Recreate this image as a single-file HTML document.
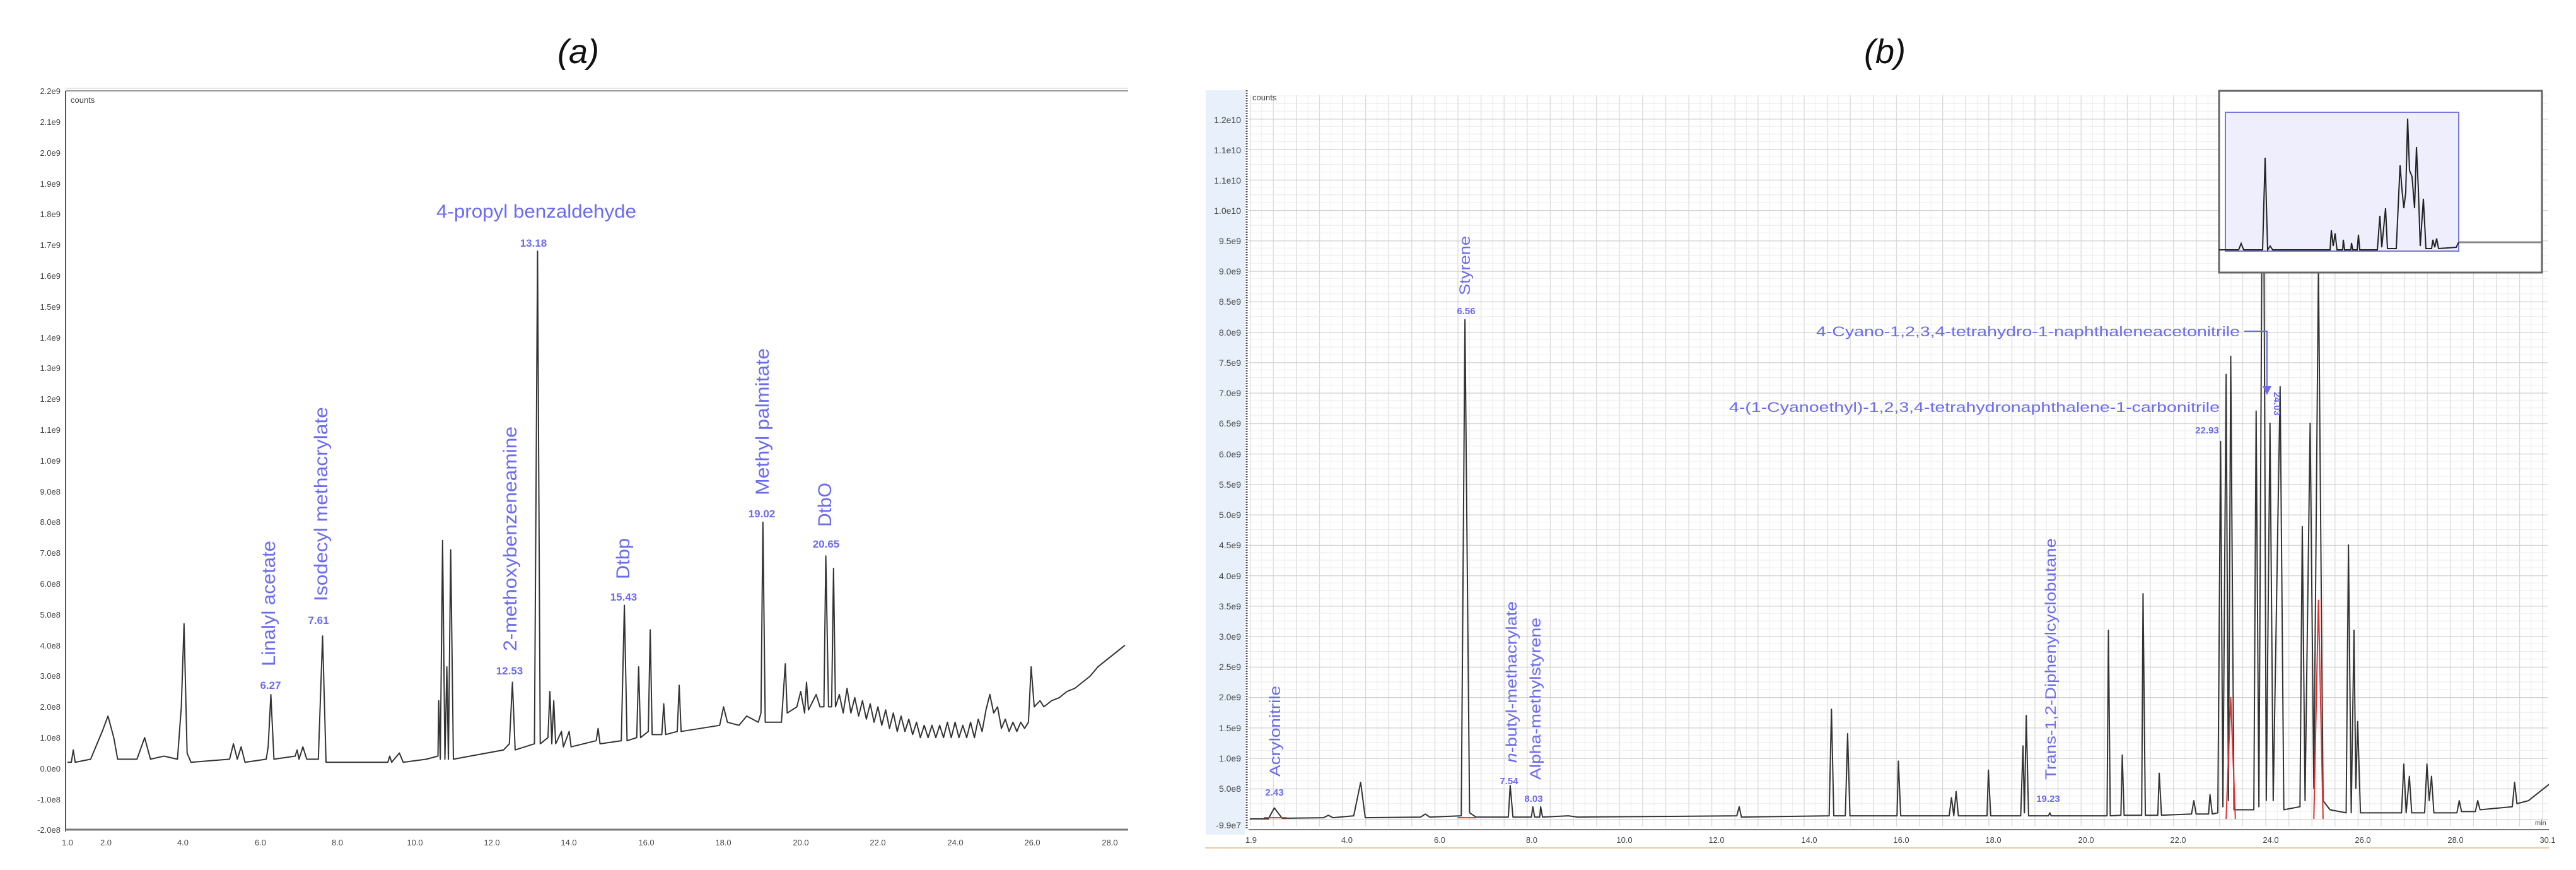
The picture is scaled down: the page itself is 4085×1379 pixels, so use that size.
<!DOCTYPE html>
<html><head><meta charset="utf-8"><style>
html,body{margin:0;padding:0;background:#fff;}
svg{display:block;}
text{font-family:"Liberation Sans",Arial,sans-serif;}
</style></head><body>
<svg width="4085" height="1379" viewBox="0 0 4085 1379" xmlns="http://www.w3.org/2000/svg">
<defs>
<pattern id="gv" x="1982" y="0" width="36.6" height="10" patternUnits="userSpaceOnUse">
<line x1="0.5" y1="0" x2="0.5" y2="10" stroke="#d8d8d8" stroke-width="1.5"/>
<line x1="18.8" y1="0" x2="18.8" y2="10" stroke="#ececec" stroke-width="1"/>
</pattern>
<pattern id="gh" x="0" y="1298" width="10" height="48.25" patternUnits="userSpaceOnUse">
<line x1="0" y1="0.5" x2="10" y2="0.5" stroke="#d0d0d0" stroke-width="1.5"/>
<line x1="0" y1="12.06" x2="10" y2="12.06" stroke="#ededed" stroke-width="1"/>
<line x1="0" y1="24.1" x2="10" y2="24.1" stroke="#e6e6e6" stroke-width="1"/>
<line x1="0" y1="36.2" x2="10" y2="36.2" stroke="#ededed" stroke-width="1"/>
</pattern>
<clipPath id="cr"><rect x="1978" y="146" width="2064" height="1170"/></clipPath>
</defs>

<text x="917" y="100" font-size="54" font-style="italic" text-anchor="middle" fill="#111">(a)</text>
<text x="2989" y="100" font-size="54" font-style="italic" text-anchor="middle" fill="#111">(b)</text>

<!-- ============ LEFT PANEL ============ -->
<line x1="104" y1="144" x2="1789" y2="144" stroke="#999" stroke-width="2"/>
<line x1="104" y1="140" x2="1789" y2="140" stroke="#ccc" stroke-width="1"/>
<line x1="104" y1="144" x2="104" y2="1318" stroke="#555" stroke-width="2"/>
<line x1="104" y1="1315" x2="1789" y2="1315" stroke="#777" stroke-width="3"/>
<text x="112" y="163" font-size="13" fill="#444">counts</text>
<g font-size="13" fill="#444" text-anchor="end">
<text x="96" y="149">2.2e9</text><text x="96" y="198">2.1e9</text><text x="96" y="247">2.0e9</text><text x="96" y="296">1.9e9</text><text x="96" y="344">1.8e9</text><text x="96" y="393">1.7e9</text><text x="96" y="442">1.6e9</text><text x="96" y="491">1.5e9</text><text x="96" y="540">1.4e9</text><text x="96" y="588">1.3e9</text><text x="96" y="637">1.2e9</text><text x="96" y="686">1.1e9</text><text x="96" y="735">1.0e9</text><text x="96" y="784">9.0e8</text><text x="96" y="832">8.0e8</text><text x="96" y="881">7.0e8</text><text x="96" y="930">6.0e8</text><text x="96" y="979">5.0e8</text><text x="96" y="1028">4.0e8</text><text x="96" y="1076">3.0e8</text><text x="96" y="1125">2.0e8</text><text x="96" y="1174">1.0e8</text><text x="96" y="1223">0.0e0</text><text x="96" y="1272">-1.0e8</text><text x="96" y="1320">-2.0e8</text>
</g>
<g font-size="13" fill="#444" text-anchor="middle">
<text x="107" y="1340">1.0</text><text x="168" y="1340">2.0</text><text x="290" y="1340">4.0</text><text x="413" y="1340">6.0</text><text x="535" y="1340">8.0</text><text x="658" y="1340">10.0</text><text x="780" y="1340">12.0</text><text x="902" y="1340">14.0</text><text x="1025" y="1340">16.0</text><text x="1147" y="1340">18.0</text><text x="1270" y="1340">20.0</text><text x="1392" y="1340">22.0</text><text x="1515" y="1340">24.0</text><text x="1637" y="1340">26.0</text><text x="1760" y="1340">28.0</text>
</g>
<g transform="translate(107,1218) scale(61.2,-488) translate(-1,0)">
<path fill="none" stroke="#333" stroke-width="2" vector-effect="non-scaling-stroke" stroke-linejoin="round" d="M1 0.02 L1.1 0.02 L1.15 0.06 L1.2 0.02 L1.6 0.03 L1.9 0.12 L2.05 0.17 L2.2 0.1 L2.3 0.03 L2.8 0.03 L3.0 0.1 L3.15 0.03 L3.5 0.04 L3.85 0.03 L3.95 0.2 L4.02 0.47 L4.1 0.05 L4.2 0.02 L5.2 0.03 L5.3 0.08 L5.4 0.03 L5.5 0.07 L5.6 0.02 L6.15 0.03 L6.2 0.07 L6.27 0.24 L6.35 0.03 L6.9 0.04 L6.95 0.06 L7.0 0.03 L7.1 0.07 L7.2 0.03 L7.5 0.03 L7.61 0.43 L7.7 0.02 L9.3 0.02 L9.35 0.04 L9.4 0.02 L9.6 0.05 L9.7 0.02 L10.3 0.03 L10.6 0.04 L10.62 0.22 L10.66 0.03 L10.72 0.74 L10.78 0.03 L10.83 0.33 L10.87 0.03 L10.93 0.71 L11.0 0.03 L12.3 0.06 L12.45 0.08 L12.53 0.28 L12.6 0.06 L13.1 0.08 L13.18 1.68 L13.25 0.08 L13.45 0.1 L13.5 0.25 L13.55 0.08 L13.6 0.22 L13.65 0.08 L13.8 0.12 L13.85 0.07 L14.0 0.12 L14.05 0.07 L14.7 0.09 L14.75 0.13 L14.8 0.08 L15.35 0.09 L15.43 0.53 L15.5 0.09 L15.75 0.1 L15.8 0.33 L15.85 0.1 L16.05 0.12 L16.1 0.45 L16.15 0.11 L16.4 0.11 L16.45 0.21 L16.5 0.11 L16.8 0.12 L16.85 0.27 L16.9 0.12 L17.9 0.14 L18.0 0.2 L18.1 0.15 L18.4 0.14 L18.6 0.17 L18.9 0.15 L18.97 0.18 L19.02 0.8 L19.08 0.15 L19.5 0.15 L19.6 0.34 L19.65 0.18 L19.9 0.2 L20.0 0.25 L20.1 0.18 L20.15 0.28 L20.2 0.19 L20.4 0.24 L20.5 0.2 L20.6 0.2 L20.65 0.69 L20.72 0.2 L20.8 0.2 L20.85 0.65 L20.9 0.2 L21.0 0.24 L21.1 0.18 L21.2 0.26 L21.3 0.18 L21.4 0.23 L21.5 0.17 L21.6 0.22 L21.7 0.16 L21.8 0.21 L21.9 0.15 L22.0 0.2 L22.1 0.14 L22.2 0.19 L22.3 0.13 L22.4 0.18 L22.5 0.12 L22.6 0.17 L22.7 0.12 L22.8 0.16 L22.9 0.11 L23.0 0.15 L23.1 0.1 L23.2 0.14 L23.3 0.1 L23.4 0.14 L23.5 0.1 L23.6 0.14 L23.7 0.1 L23.8 0.15 L23.9 0.1 L24.0 0.15 L24.1 0.1 L24.2 0.14 L24.3 0.1 L24.4 0.15 L24.5 0.1 L24.6 0.16 L24.7 0.12 L24.8 0.19 L24.9 0.24 L25.0 0.18 L25.1 0.2 L25.2 0.13 L25.3 0.16 L25.4 0.12 L25.5 0.15 L25.6 0.12 L25.7 0.15 L25.8 0.13 L25.9 0.15 L25.97 0.33 L26.05 0.2 L26.2 0.22 L26.3 0.2 L26.5 0.22 L26.7 0.23 L26.9 0.25 L27.1 0.26 L27.3 0.28 L27.5 0.3 L27.7 0.33 L27.9 0.35 L28.1 0.37 L28.4 0.4"/>
</g>
<g fill="#6b6bf0" font-size="30">
<text x="692" y="345" textLength="317" lengthAdjust="spacingAndGlyphs">4-propyl benzaldehyde</text>
<text transform="translate(436,1056) rotate(-90)" textLength="199" lengthAdjust="spacingAndGlyphs">Linalyl acetate</text>
<text transform="translate(519,953) rotate(-90)" textLength="308" lengthAdjust="spacingAndGlyphs">Isodecyl methacrylate</text>
<text transform="translate(819,1032) rotate(-90)" textLength="356" lengthAdjust="spacingAndGlyphs">2-methoxybenzeneamine</text>
<text transform="translate(998,918) rotate(-90)" textLength="65" lengthAdjust="spacingAndGlyphs">Dtbp</text>
<text transform="translate(1219,785) rotate(-90)" textLength="233" lengthAdjust="spacingAndGlyphs">Methyl palmitate</text>
<text transform="translate(1318,835) rotate(-90)" textLength="70" lengthAdjust="spacingAndGlyphs">DtbO</text>
</g>
<g fill="#6b6bf0" font-size="17" font-weight="bold" text-anchor="middle">
<text x="846" y="391">13.18</text>
<text x="429" y="1092">6.27</text>
<text x="505" y="989">7.61</text>
<text x="808" y="1069">12.53</text>
<text x="989" y="952">15.43</text>
<text x="1208" y="820">19.02</text>
<text x="1310" y="868">20.65</text>
</g>

<!-- ============ RIGHT PANEL ============ -->
<rect x="1911" y="143" width="2131" height="1201" fill="#fff"/>
<rect x="1912" y="143" width="62" height="1180" fill="#e8f1fb"/>
<rect x="1980" y="150" width="2060" height="1160" fill="url(#gv)"/>
<rect x="1980" y="150" width="2060" height="1160" fill="url(#gh)"/>
<line x1="1977" y1="143" x2="1977" y2="1315" stroke="#555" stroke-width="3" stroke-dasharray="2,2"/>
<line x1="1980" y1="1315" x2="4042" y2="1315" stroke="#777" stroke-width="2"/>
<line x1="1911" y1="1344" x2="4042" y2="1344" stroke="#e8c9a0" stroke-width="2"/>
<text x="1986" y="159" font-size="13" fill="#444">counts</text>
<text x="4020" y="1308" font-size="11" fill="#444">min</text>
<g font-size="14" fill="#444" text-anchor="end">
<text x="1968" y="195">1.2e10</text><text x="1968" y="243">1.1e10</text><text x="1968" y="291">1.1e10</text><text x="1968" y="339">1.0e10</text>
<text x="1968" y="387">9.5e9</text><text x="1968" y="435">9.0e9</text><text x="1968" y="483">8.5e9</text><text x="1968" y="532">8.0e9</text><text x="1968" y="580">7.5e9</text><text x="1968" y="628">7.0e9</text><text x="1968" y="676">6.5e9</text><text x="1968" y="725">6.0e9</text><text x="1968" y="773">5.5e9</text><text x="1968" y="821">5.0e9</text><text x="1968" y="869">4.5e9</text><text x="1968" y="918">4.0e9</text><text x="1968" y="966">3.5e9</text><text x="1968" y="1014">3.0e9</text><text x="1968" y="1062">2.5e9</text><text x="1968" y="1110">2.0e9</text><text x="1968" y="1159">1.5e9</text><text x="1968" y="1207">1.0e9</text><text x="1968" y="1255">5.0e8</text><text x="1968" y="1313">-9.9e7</text>
</g>
<g font-size="13" fill="#444" text-anchor="middle">
<text x="1984" y="1336">1.9</text><text x="2136" y="1336">4.0</text><text x="2283" y="1336">6.0</text><text x="2429" y="1336">8.0</text><text x="2576" y="1336">10.0</text><text x="2722" y="1336">12.0</text><text x="2869" y="1336">14.0</text><text x="3015" y="1336">16.0</text><text x="3161" y="1336">18.0</text><text x="3308" y="1336">20.0</text><text x="3454" y="1336">22.0</text><text x="3601" y="1336">24.0</text><text x="3747" y="1336">26.0</text><text x="3894" y="1336">28.0</text><text x="4040" y="1336">30.1</text>
</g>
<g clip-path="url(#cr)">
<g transform="translate(1982,1298) scale(73.2,-96.5) translate(-1.9,0)">
<path fill="none" stroke="#333" stroke-width="2" vector-effect="non-scaling-stroke" stroke-linejoin="round" d="M1.9 0 L2.3 0 L2.43 0.18 L2.6 0.01 L3.5 0.02 L3.6 0.06 L3.7 0.02 L4.15 0.05 L4.3 0.6 L4.4 0.02 L5.6 0.03 L5.7 0.08 L5.8 0.03 L6.48 0.05 L6.56 8.2 L6.66 0.1 L6.8 0.03 L7.5 0.03 L7.54 0.55 L7.6 0.03 L8.0 0.03 L8.03 0.2 L8.07 0.03 L8.18 0.03 L8.2 0.2 L8.24 0.03 L8.8 0.05 L9.0 0.03 L12.45 0.05 L12.5 0.2 L12.55 0.03 L14.45 0.05 L14.5 1.8 L14.55 0.05 L14.8 0.05 L14.85 1.4 L14.9 0.05 L15.92 0.05 L15.95 0.95 L16.0 0.05 L17.05 0.05 L17.1 0.35 L17.15 0.05 L17.2 0.45 L17.25 0.05 L17.87 0.05 L17.9 0.8 L17.95 0.05 L18.6 0.05 L18.65 1.2 L18.68 0.1 L18.72 1.7 L18.77 0.05 L19.2 0.05 L19.23 0.1 L19.26 0.05 L20.47 0.05 L20.5 3.1 L20.54 0.05 L20.77 0.06 L20.8 1.05 L20.84 0.06 L21.22 0.06 L21.25 3.7 L21.3 0.06 L21.57 0.06 L21.6 0.75 L21.65 0.06 L22.3 0.08 L22.35 0.3 L22.4 0.08 L22.67 0.08 L22.7 0.4 L22.75 0.08 L22.87 0.1 L22.93 6.2 L22.98 0.2 L23.05 7.3 L23.1 0.3 L23.15 7.6 L23.22 0.15 L23.65 0.15 L23.7 6.7 L23.76 0.2 L23.85 13 L23.92 0.3 L24.0 6.5 L24.07 0.3 L24.22 7.1 L24.3 0.15 L24.65 0.2 L24.7 4.8 L24.76 0.3 L24.87 6.5 L24.95 0.5 L25.05 9.1 L25.15 0.3 L25.3 0.15 L25.65 0.1 L25.7 4.5 L25.76 0.1 L25.82 3.1 L25.86 0.5 L25.9 1.6 L25.96 0.1 L26.85 0.1 L26.9 0.9 L26.95 0.1 L27.02 0.7 L27.07 0.1 L27.35 0.1 L27.4 0.9 L27.45 0.3 L27.5 0.7 L27.55 0.1 L28.05 0.1 L28.1 0.3 L28.15 0.12 L28.45 0.12 L28.5 0.3 L28.55 0.15 L29.25 0.2 L29.3 0.6 L29.35 0.25 L29.6 0.3 L30.1 0.6"/>
<path fill="none" stroke="#e03030" stroke-width="2" vector-effect="non-scaling-stroke" d="M23.05 0 L23.15 2.0 L23.25 0 M24.95 0 L25.05 3.6 L25.15 0 M2.2 0.02 L2.7 0.02 M6.4 0.02 L6.8 0.02"/>
</g>
</g>
<rect x="3519" y="144" width="512" height="288" fill="#fff" stroke="#666" stroke-width="3"/>
<rect x="3529" y="178" width="370" height="220" fill="#eeeefc" stroke="#7777dd" stroke-width="2"/>
<line x1="3899" y1="384" x2="4030" y2="384" stroke="#888" stroke-width="3"/>
<path fill="none" stroke="#222" stroke-width="2" d="M3519 396 L3550 396 L3554 386 L3558 396 L3588 396 L3592 250 L3596 396 L3600 390 L3604 396 L3695 396 L3697 365 L3700 390 L3703 370 L3706 396 L3715 396 L3716 380 L3718 396 L3728 396 L3729 385 L3731 396 L3738 396 L3740 372 L3742 396 L3770 396 L3774 342 L3777 392 L3783 330 L3786 394 L3800 394 L3806 262 L3809 300 L3812 330 L3815 305 L3818 188 L3821 270 L3825 280 L3829 330 L3832 233 L3835 300 L3838 390 L3843 315 L3847 394 L3856 394 L3858 380 L3861 392 L3864 378 L3867 394 L3895 392 L3899 384"/>
<g fill="#6b6bf0" font-size="24">
<text transform="translate(2331,468) rotate(-90)" textLength="94" lengthAdjust="spacingAndGlyphs">Styrene</text>
<text transform="translate(2030,1231) rotate(-90)" textLength="144" lengthAdjust="spacingAndGlyphs">Acrylonitrile</text>
<text transform="translate(2405,1209) rotate(-90)" textLength="256" lengthAdjust="spacingAndGlyphs"><tspan font-style="italic">n</tspan>-butyl-methacrylate</text>
<text transform="translate(2443,1236) rotate(-90)" textLength="257" lengthAdjust="spacingAndGlyphs">Alpha-methylstyrene</text>
<text transform="translate(3260,1236) rotate(-90)" textLength="383" lengthAdjust="spacingAndGlyphs">Trans-1,2-Diphenylcyclobutane</text>
<text x="2880" y="533" font-size="22" textLength="672" lengthAdjust="spacingAndGlyphs">4-Cyano-1,2,3,4-tetrahydro-1-naphthaleneacetonitrile</text>
<text x="2742" y="653" font-size="22" textLength="778" lengthAdjust="spacingAndGlyphs">4-(1-Cyanoethyl)-1,2,3,4-tetrahydronaphthalene-1-carbonitrile</text>
</g>
<path d="M3559 525 L3595 525 L3595 615" fill="none" stroke="#6b6bf0" stroke-width="2"/>
<path d="M3588 612 L3602 612 L3595 626 Z" fill="#6b6bf0"/>
<g fill="#6b6bf0" font-size="15" font-weight="bold" text-anchor="middle">
<text x="2325" y="498">6.56</text>
<text x="2021" y="1261">2.43</text>
<text x="2393" y="1243">7.54</text>
<text x="2432" y="1271">8.03</text>
<text x="3248" y="1271">19.23</text>
<text x="3500" y="687">22.93</text>
<text transform="translate(3606,640) rotate(90)">24.03</text>
</g>
</svg>
</body></html>
